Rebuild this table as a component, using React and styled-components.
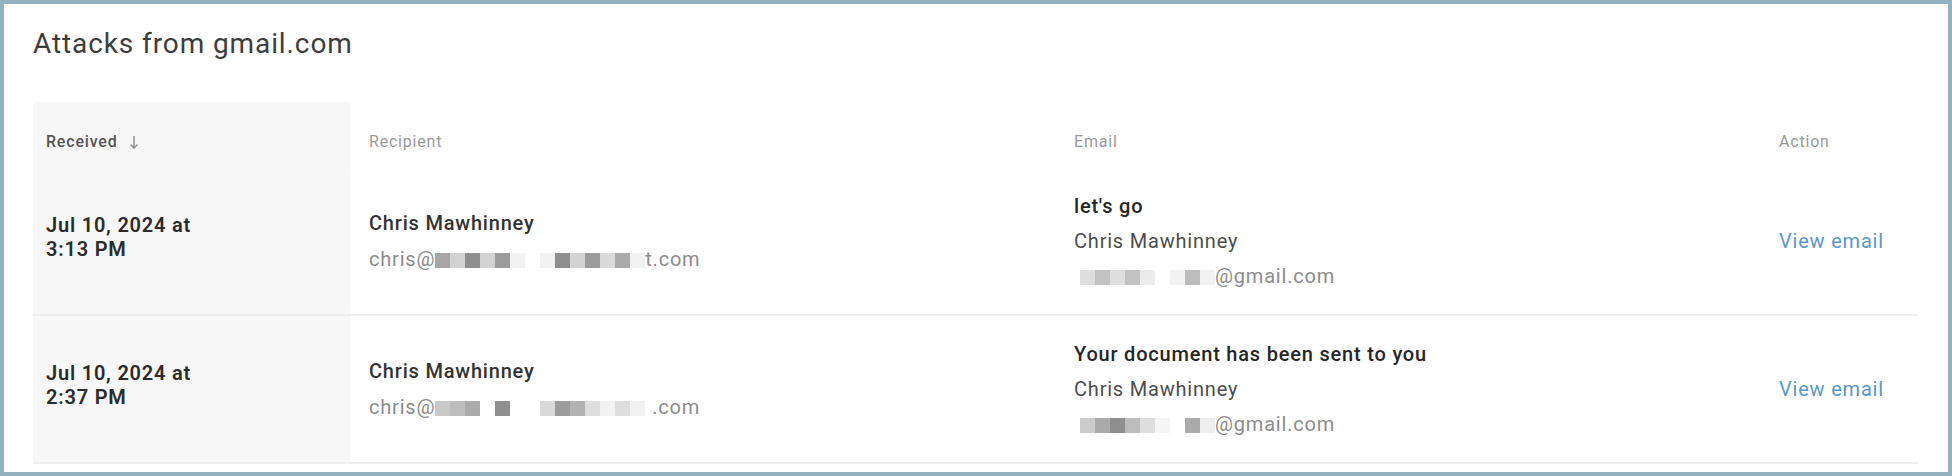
import styled, { createGlobalStyle } from "styled-components";

const GlobalStyle = createGlobalStyle`
  * {
    box-sizing: border-box;
    margin: 0;
    padding: 0;
  }

  body {
    width: 1952px;
    height: 476px;
    overflow: hidden;
    background: #93b3c1;
    font-family: Roboto, "Liberation Sans", Arial, sans-serif;
  }
`;

const rows = [
  {
    date: ["Jul 10, 2024 at", "3:13 PM"],
    recipient: "Chris Mawhinney",
    recipientMask: ["#a6a6a6", "#d2d2d2", "#8f8f8f", "#d2d2d2", "#9c9c9c", "#f2f2f2", "#fff", "#f2f2f2", "#8f8f8f", "#d2d2d2", "#9c9c9c", "#dadada", "#ababab", "#f2f2f2"],
    recipientTail: "t.com",
    tailGap: 0,
    subject: "let's go",
    sender: "Chris Mawhinney",
    senderMask: ["#dedede", "#c2c2c2", "#dedede", "#c2c2c2", "#ececec", "#fff", "#f2f2f2", "#bcbcbc", "#f2f2f2"],
  },
  {
    date: ["Jul 10, 2024 at", "2:37 PM"],
    recipient: "Chris Mawhinney",
    recipientMask: ["#c9c9c9", "#bdbdbd", "#ababab", "#fff", "#8f8f8f", "#fff", "#fff", "#d9d9d9", "#9c9c9c", "#b2b2b2", "#dedede", "#f2f2f2", "#dedede", "#f2f2f2"],
    recipientTail: ".com",
    tailGap: 7,
    subject: "Your document has been sent to you",
    sender: "Chris Mawhinney",
    senderMask: ["#cccccc", "#ababab", "#8f8f8f", "#bcbcbc", "#dedede", "#f5f5f5", "#fff", "#ababab", "#eeeeee"],
  },
];

const SortArrow = () => (
  <svg width="10" height="15" viewBox="0 0 10 15" fill="none" stroke="#8a8a8a" strokeWidth="1.4" strokeLinecap="round" strokeLinejoin="round">
    <path d="M5 1.5v11.5" />
    <path d="M2 10l3 3 3-3" />
  </svg>
);

const Masked = ({ shades, tail, inset, gap }) => (
  <MaskLine $inset={inset}>
    {shades.map((s, i) => (
      <MaskBlock key={i} $shade={s} />
    ))}
    <Tail $gap={gap}>{tail}</Tail>
  </MaskLine>
);

const App = () => {
  return (
    <Frame>
      <GlobalStyle />
      <Title>Attacks from gmail.com</Title>
      <Table>
        <HeaderRow>
          <HeadCell $sorted>
            Received <SortArrow />
          </HeadCell>
          <HeadCell>Recipient</HeadCell>
          <HeadCell>Email</HeadCell>
          <HeadCell>Action</HeadCell>
        </HeaderRow>
        {rows.map((r, i) => (
          <Row key={i}>
            <DateCell>
              {r.date.map((d) => (
                <div key={d}>{d}</div>
              ))}
            </DateCell>
            <Cell>
              <Stack $gap={10}>
                <Name>{r.recipient}</Name>
                <Address>
                  chris@
                  <Masked shades={r.recipientMask} tail={r.recipientTail} gap={r.tailGap} />
                </Address>
              </Stack>
            </Cell>
            <Cell>
              <Stack $gap={9}>
                <Subject>{r.subject}</Subject>
                <Sender>{r.sender}</Sender>
                <Address>
                  <Masked shades={r.senderMask} tail="@gmail.com" inset={6} />
                </Address>
              </Stack>
            </Cell>
            <Cell>
              <ViewLink href="#">View email</ViewLink>
            </Cell>
          </Row>
        ))}
      </Table>
    </Frame>
  );
};

const Frame = styled.div`
  width: 1952px;
  height: 476px;
  border: 4px solid #93b3c1;
  background: #fff;
  padding: 23px 30px 0 29px;
  display: flex;
  flex-direction: column;
`;

const Title = styled.h1`
  font-size: 28px;
  line-height: 34px;
  font-weight: 400;
  letter-spacing: 0.9px;
  color: #3d3d3d;
`;

const Table = styled.div`
  margin-top: 41px;
  display: flex;
  flex-direction: column;
`;

const columns = "317px 705px 705px 1fr";

const HeaderRow = styled.div`
  display: grid;
  grid-template-columns: ${columns};
  height: 66px;
`;

const HeadCell = styled.div`
  display: flex;
  align-items: center;
  gap: 12px;
  height: 66px;
  padding: 30px 0 16px ${(p) => (p.$sorted ? "13px" : "19px")};
  font-size: 16px;
  line-height: 20px;
  letter-spacing: 0.8px;
  font-weight: ${(p) => (p.$sorted ? 500 : 400)};
  color: ${(p) => (p.$sorted ? "#555" : "#9a9a9a")};
  background: ${(p) => (p.$sorted ? "#f7f7f7" : "transparent")};
  border-radius: ${(p) => (p.$sorted ? "4px 4px 0 0" : "0")};
`;

const Row = styled.div`
  display: grid;
  grid-template-columns: ${columns};
  height: 148px;
  border-bottom: 2px solid #efefef;
`;

const Cell = styled.div`
  display: flex;
  align-items: center;
  padding-left: 19px;
  font-size: 20px;
  letter-spacing: 0.8px;
`;

const DateCell = styled.div`
  display: flex;
  flex-direction: column;
  justify-content: center;
  padding: 0 0 8px 13px;
  background: #f7f7f7;
  box-shadow: 2px 0 4px -2px rgba(0, 0, 0, 0.04);
  font-size: 20px;
  line-height: 24px;
  letter-spacing: 0.8px;
  font-weight: 600;
  color: #2b2b2b;
`;

const Stack = styled.div`
  display: flex;
  flex-direction: column;
  gap: ${(p) => p.$gap}px;
  line-height: 26px;
`;

const Name = styled.div`
  font-weight: 500;
  color: #333;
`;

const Subject = styled.div`
  font-weight: 500;
  color: #262626;
`;

const Sender = styled.div`
  font-weight: 400;
  color: #4d4d4d;
`;

const Address = styled.div`
  display: flex;
  align-items: center;
  color: #8c8c8c;
  font-weight: 400;
`;

const MaskLine = styled.span`
  display: inline-flex;
  align-items: center;
  margin-left: ${(p) => p.$inset || 0}px;
`;

const MaskBlock = styled.span`
  display: inline-block;
  width: 15px;
  height: 15px;
  margin-top: 2px;
  background: ${(p) => p.$shade};
`;

const Tail = styled.span`
  margin-left: ${(p) => p.$gap || 0}px;
`;

const ViewLink = styled.a`
  color: #5a98cc;
  text-decoration: none;
  font-size: 20px;
  line-height: 26px;
`;

export default App;
